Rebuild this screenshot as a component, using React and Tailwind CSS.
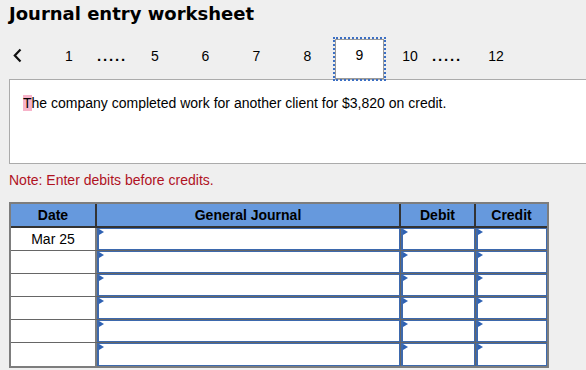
import React from "react";

const cols = "grid grid-cols-[86px_304px_75px_1fr]";

function Arrow() {
    return (
        <span className="absolute left-0 top-0 w-0 h-0 border-y-[3px] border-y-transparent border-l-[5px] border-l-[#2f62b3]" />
    );
}

function InputCell({ last }) {
    return (
        <div className={`bg-white ${last ? "" : "border-r border-[#666]"}`}>
            <div className="relative h-full border-l-2 border-t border-b border-r border-[#3d69ad] bg-white">
                <Arrow />
            </div>
        </div>
    );
}

export default function App() {
    const rows = ["Mar 25", "", "", "", "", ""];
    const pages = [
        { label: "1", w: "w-[50px]" },
        { label: ".....", w: "w-[36px]", dots: true },
        { label: "5", w: "w-[50px]" },
        { label: "6", w: "w-[51px]" },
        { label: "7", w: "w-[51px]" },
        { label: "8", w: "w-[51px]" },
        { label: "9", w: "w-[53px]", active: true },
        { label: "10", w: "w-[48px]" },
        { label: ".....", w: "w-[26px]", dots: true },
        { label: "12", w: "w-[72px]" },
    ];

    return (
        <div className="w-[586px] h-[370px] overflow-hidden bg-[#efefef] font-['Liberation_Sans',Arial,sans-serif] text-black">
            <h1 className="pl-[9px] pt-[3px] h-[37px] text-[18px] leading-[22px] font-bold font-['DejaVu_Sans',Verdana,sans-serif]">
                Journal entry worksheet
            </h1>

            <div className="flex h-[42px] items-start">
                <div className="w-[44px] pl-[13px] pt-[11px]">
                    <svg width="9" height="15" viewBox="0 0 9 15">
                        <polyline points="7.5,1.5 1.8,7.5 7.5,13.5" fill="none" stroke="#111" strokeWidth="2.2" />
                    </svg>
                </div>
                {pages.map((p, i) =>
                    p.active ? (
                        <div key={i} className={`${p.w} relative z-10 h-[44px] border-2 border-dotted border-[#3b6fc4]`}>
                            <div className="h-full border border-[#9a9a9a] bg-white flex justify-center pt-[7px] text-[14px] leading-[16px]">
                                {p.label}
                            </div>
                        </div>
                    ) : (
                        <div
                            key={i}
                            className={`${p.w} flex justify-center pt-[11px] leading-[16px] ${p.dots ? "text-[15px] font-bold tracking-[1.8px]" : "text-[14px]"}`}
                        >
                            {p.label}
                        </div>
                    )
                )}
            </div>

            <div className="ml-[9px] w-[600px] h-[85px] border border-[#ababab] bg-white pl-[13px] pt-[14px] text-[14px] leading-[18px]">
                <span className="bg-[#f7b3c9]">T</span>he company completed work for another client for $3,820 on credit.
            </div>

            <p className="ml-[9px] mt-[8px] text-[14px] leading-[16px] text-[#b0121f]">
                Note: Enter debits before credits.
            </p>

            <div className="ml-[9px] mt-[14px] w-[540px] border-2 border-[#7d7d7d] text-[14px]">
                <div className={`${cols} h-[24px] bg-[#6699dd] font-bold border-b-2 border-[#333]`}>
                    <div className="flex items-center justify-center border-r-2 border-[#333]">Date</div>
                    <div className="flex items-center justify-center border-r-2 border-[#333]">General Journal</div>
                    <div className="flex items-center justify-center border-r-2 border-[#333]">Debit</div>
                    <div className="flex items-center justify-center">Credit</div>
                </div>
                {rows.map((d, i) => (
                    <div key={i} className={`${cols} h-[23px] ${i < rows.length - 1 ? "border-b border-[#666]" : ""}`}>
                        <div className="flex items-center justify-center bg-white border-r-2 border-[#7d7d7d]">{d}</div>
                        <InputCell />
                        <InputCell />
                        <InputCell last />
                    </div>
                ))}
            </div>
        </div>
    );
}
